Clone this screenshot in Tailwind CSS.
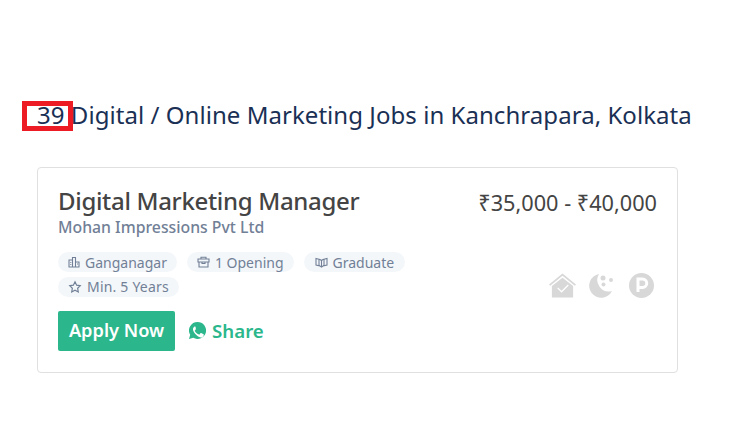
<!DOCTYPE html>
<html lang="en">
  <head>
    <meta charset="UTF-8" />
    <meta name="viewport" content="width=device-width, initial-scale=1.0" />
    <title>Jobs</title>
    <script src="https://cdn.jsdelivr.net/npm/@tailwindcss/browser@4"></script>
  </head>
  <body class="bg-white h-[447px] overflow-hidden font-['Noto_Sans',sans-serif]">
    <main class="relative pl-[37px] pr-[40px] pt-[98px]">
      <!-- Red marker over the job count -->
      <div class="absolute left-[22px] top-[101px] w-[51px] h-[30px] border-[5px] border-[#ed1c24]"></div>

      <h1 class="text-[24px] leading-[34px] font-[450] tracking-[0.05px] text-[#1a3055] whitespace-nowrap">39 Digital / Online Marketing Jobs in Kanchrapara, Kolkata</h1>

      <!-- Job card -->
      <section class="mt-[35px] w-[641px] h-[206px] border border-[#e0e0e0] rounded-[4px] px-5 pt-[17px]">
        <div class="flex justify-between">
          <div>
            <h2 class="text-[24px] leading-[32px] font-medium tracking-[-0.32px] text-[#444444]">Digital Marketing Manager</h2>
            <p class="text-[15.8px] leading-[20px] font-medium text-[#718096]">Mohan Impressions Pvt Ltd</p>
          </div>
          <p class="text-[21.7px] leading-[32px] pt-[2px] text-[#444444]">₹35,000 - ₹40,000</p>
        </div>

        <div class="flex justify-between mt-[15px]">
          <div class="w-[370px] flex flex-wrap gap-x-[10px] gap-y-[3px]">
            <span class="flex items-center gap-[5px] h-[20px] px-[10px] rounded-full bg-[#f4f7fa] text-[14px] text-[#718096]">
              <svg class="w-[12px] h-[12px]" viewBox="0 0 12 12" fill="none" stroke="currentColor" stroke-width="1.1"><path d="M1 11V4h3.500v7M4.500 11V1.500h3V11M7.500 6H11v5M.5 11h11M2.300 6.500h1M2.300 8.500h1M9 8h1"/></svg>
              Ganganagar
            </span>
            <span class="flex items-center gap-[5px] h-[20px] px-[10px] rounded-full bg-[#f4f7fa] text-[14px] text-[#718096]">
              <svg class="w-[13px] h-[12px]" viewBox="0 0 13 12" fill="none" stroke="currentColor" stroke-width="1.1"><path d="M4 3V1.200h5V3M1 3h11v3H1zM2 6v5h9V6M5 6v1.500h3V6"/></svg>
              1 Opening
            </span>
            <span class="flex items-center gap-[5px] h-[20px] px-[11px] rounded-full bg-[#f4f7fa] text-[14px] text-[#718096]">
              <svg class="w-[13px] h-[12px]" viewBox="0 0 13 12" fill="none" stroke="currentColor" stroke-width="1.1"><path d="M1 2.500l4 1 1.500 1 1.500-1 4-1v6.500l-4 1-1.500 1-1.500-1-4-1zM4 3v7M9 3v7M6.500 4.500V11"/></svg>
              Graduate
            </span>
            <span class="flex items-center gap-[5px] h-[20px] px-[10px] rounded-full bg-[#f4f7fa] text-[14px] tracking-[0.2px] text-[#718096]">
              <svg class="w-[14px] h-[14px]" viewBox="0 0 24 24" fill="none" stroke="currentColor" stroke-width="2"><path d="M12 3l2.800 5.800 6.200.9-4.500 4.400 1.100 6.300L12 17.400l-5.600 3 1.100-6.300L3 9.700l6.200-.9z"/></svg>
              Min. 5 Years
            </span>
          </div>

          <!-- Perks -->
          <div class="flex items-center mt-[20px] mr-[3px] h-[26px]">
            <svg class="w-[27px] h-[25px]" viewBox="0 0 28 25"><path d="M0 11.500L14 0l14 11.500-1.200 1.300L14 2.500 1.200 12.800z" fill="#d8d8d8"/><path d="M3 13L14 4.500 25 13v12H3z" fill="#d8d8d8"/><path d="M9 15l4 4 7-7" fill="none" stroke="#fff" stroke-width="1.300"/></svg>
            <svg class="ml-[12px] w-[26px] h-[25px]" viewBox="0 0 26 25" fill="#d8d8d8"><path d="M11 1a11.500 11.500 0 0 0 13 17A12 12 0 1 1 11 1z"/><circle cx="15" cy="5" r="2.500"/><circle cx="23" cy="7" r="2"/><circle cx="15.500" cy="11.500" r="2"/></svg>
            <svg class="ml-[15px] w-[25px] h-[25px]" viewBox="0 0 25 25"><circle cx="12.500" cy="12.500" r="12.500" fill="#d8d8d8"/><path d="M9 19V6h4.500a4 4 0 0 1 0 8.500H9" fill="none" stroke="#fff" stroke-width="3"/></svg>
          </div>
        </div>

        <div class="flex items-center gap-[14px] mt-[13px]">
          <button class="h-[40px] w-[117px] rounded-[2px] bg-[#2bb78b] text-white text-[18.2px] font-semibold">Apply Now</button>
          <a class="flex items-center gap-[6px] text-[18.7px] font-semibold text-[#2bb78b]">
            <svg class="w-[17px] h-[17px]" viewBox="0 0 24 24" fill="currentColor"><path fill-rule="evenodd" d="M12 0a12 12 0 0 0-10.300 18.100L0 24l6.100-1.600A12 12 0 1 0 12 0zM8.300 6.300c-.3 0-.8.100-1.200.6-.4.500-1.500 1.500-1.500 3.500s1.500 4 1.700 4.300c.2.300 3 4.600 7.200 6.300 3.500 1.400 4.200.7 5-.1.800-.7 1.200-1.800 1.300-2.300.1-.5.100-.9 0-1-.1-.2-.4-.3-.8-.5l-2.900-1.400c-.4-.1-.7-.2-1 .2l-1.300 1.700c-.2.300-.5.300-.9.100-.4-.2-1.800-.7-3.400-2.100-1.300-1.100-2.100-2.500-2.400-2.900-.2-.4 0-.6.200-.8l.9-1c.2-.3.300-.5.400-.8.100-.3.100-.6 0-.8L9.300 7c-.3-.7-.6-.7-1-.7z"/></svg>
            Share
          </a>
        </div>
      </section>
    </main>
  </body>
</html>
